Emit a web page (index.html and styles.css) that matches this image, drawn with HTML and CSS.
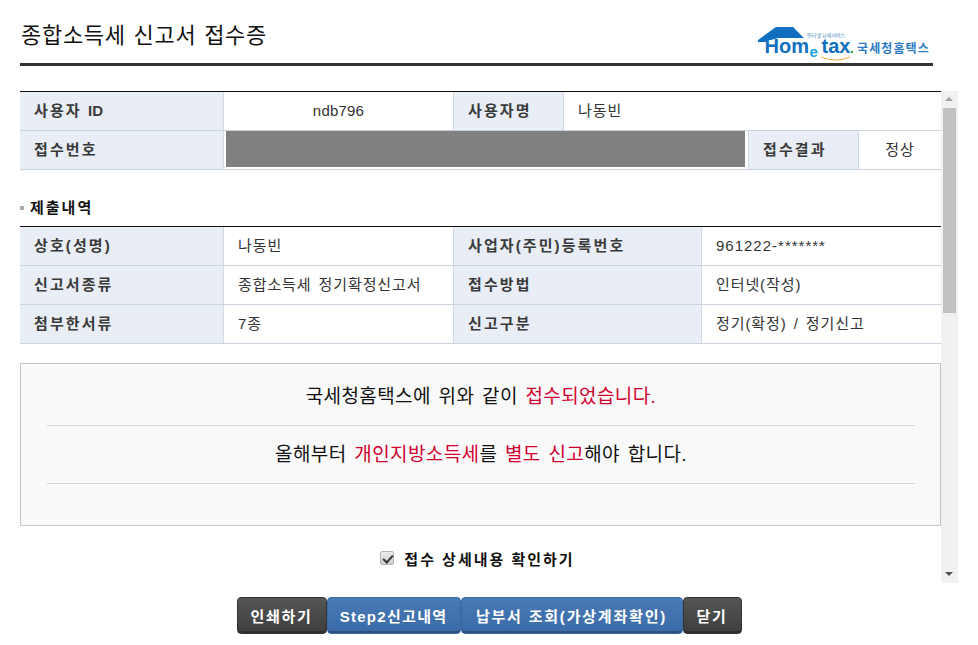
FILE: index.html
```html
<!DOCTYPE html>
<html lang="ko">
<head>
<meta charset="utf-8">
<title>종합소득세 신고서 접수증</title>
<link rel="stylesheet" href="styles.css">
</head>
<body>
<div class="page">
  <header class="head">
    <h1 class="title">종합소득세 신고서 접수증</h1>
    <svg class="logo" width="173" height="36" viewBox="0 0 173 36" aria-label="Hometax 국세청홈택스">
      <path d="M0 13 L18 0 H35 L46 11 H20 L13 13 H8 L8 15 H0 Z" fill="#0f6fbe"/>
      <text x="6.500" y="26" class="logo-word">Hom</text>
      <text x="51.500" y="30" class="logo-e">e</text>
      <text x="63.500" y="26" class="logo-word">tax</text>
      <circle cx="94" cy="25" r="1.300" fill="#2fae4a"/>
      <path d="M63 30 Q78 36 92 30" fill="none" stroke="#f2a93b" stroke-width="1"/>
      <text x="49" y="10" class="logo-tiny">인터넷 납세서비스</text>
      <text x="99" y="26" class="logo-kr">국세청홈택스</text>
    </svg>
  </header>
  <div class="frame">
    <main class="scroll">
      <table class="grid">
        <colgroup><col class="c204"><col class="c230"><col class="c110"><col class="c185"><col class="c110"><col class="c82"></colgroup>
        <tr>
          <th>사용자 <span class="latin">ID</span></th>
          <td class="center latin">ndb796</td>
          <th>사용자명</th>
          <td colspan="3">나동빈</td>
        </tr>
        <tr>
          <th>접수번호</th>
          <td colspan="3" class="redact-cell"><div class="redact"></div></td>
          <th>접수결과</th>
          <td class="center">정상</td>
        </tr>
      </table>
      <h2 class="section"><span class="bullet"></span>제출내역</h2>
      <table class="grid">
        <colgroup><col class="c204"><col class="c230"><col class="c248"><col class="c239"></colgroup>
        <tr><th>상호(성명)</th><td>나동빈</td><th>사업자(주민)등록번호</th><td class="num">961222-*******</td></tr>
        <tr><th>신고서종류</th><td>종합소득세 정기확정신고서</td><th>접수방법</th><td>인터넷(작성)</td></tr>
        <tr><th>첨부한서류</th><td>7종</td><th>신고구분</th><td>정기(확정) / 정기신고</td></tr>
      </table>
      <section class="notice">
        <p class="msg first">국세청홈택스에 위와 같이 <em>접수되었습니다.</em></p>
        <p class="msg">올해부터 <em>개인지방소득세</em>를 <em>별도 신고</em>해야 합니다.</p>
      </section>
      <label class="check"><input type="checkbox" checked><span>접수 상세내용 확인하기</span></label>
    </main>
    <div class="scrollbar">
      <span class="arrow up"></span>
      <div class="track"><div class="thumb"></div></div>
      <span class="arrow down"></span>
    </div>
  </div>
  <nav class="buttons">
    <button class="btn dark b1">인쇄하기</button><button class="btn blue b2">Step2신고내역</button><button class="btn blue b3">납부서 조회(가상계좌확인)</button><button class="btn dark b4">닫기</button>
  </nav>
</div>
</body>
</html>
```
FILE: styles.css
```css
* { box-sizing: border-box; }
html, body { margin: 0; padding: 0; background: #fff; overflow: hidden; }
body { font-family: "Liberation Sans", "Noto Sans CJK KR", sans-serif; color: #333; font-size: 15px; }
.page { width: 978px; height: 645px; padding-top: 14px; }
.head { margin: 0 45px 0 20px; height: 52px; border-bottom: 3px solid #333; display: flex; justify-content: space-between; align-items: flex-start; }
.title { margin: 3px 0 0 1px; font-size: 22px; font-weight: 400; color: #111; line-height: 38px; letter-spacing: 0.7px; word-spacing: 1px; }
.logo { margin-top: 13px; margin-right: 2px; overflow: visible; }
.logo-word { font: 700 20px "Liberation Sans", sans-serif; fill: #0f6fbe; }
.logo-e { font: 700 15px "Liberation Sans", sans-serif; fill: #17a0d8; }
.logo-tiny { font: 400 5px "Noto Sans CJK KR", sans-serif; fill: #3f7fc0; }
.logo-kr { font: 700 12px "Noto Sans CJK KR", sans-serif; fill: #2f7cc4; letter-spacing: 1.100px; }
.frame { margin: 25px 20px 0 20px; display: flex; height: 492px; }
.scroll { width: 921px; overflow: hidden; }
.grid { width: 921px; border-collapse: separate; border-spacing: 0; table-layout: fixed; border-top: 1px solid #111; }
.c204 { width: 204px; } .c230 { width: 230px; } .c110 { width: 110px; } .c185 { width: 185px; } .c82 { width: 82px; } .c248 { width: 248px; } .c239 { width: 239px; }
.grid th, .grid td { height: 39px; padding: 0 0 0 14px; border-bottom: 1px solid #c9d3de; line-height: 20px; text-align: left; white-space: nowrap; }
.grid th { background: #e8edf6; color: #3a3a3a; font-size: 15px; font-weight: 700; letter-spacing: 2.100px; border-right: 1px solid #d3dae3; }
.grid th .latin { letter-spacing: 0.2px; }
.grid td { background: #fff; color: #333; font-size: 15px; letter-spacing: 0.9px; word-spacing: 2px; border-right: 1px solid #d3dae3; }
.grid td:last-child { border-right: 0; }
.grid td.center { text-align: center; padding-left: 0; }
.grid td.latin { letter-spacing: 0.2px; }
.grid td.num { letter-spacing: 1px; }
.grid td.redact-cell { padding: 0 3px 2px 2px; }
.redact { height: 36px; background: #808080; }
.section { margin: 28px 0 8px 0; height: 20px; font-size: 15px; line-height: 20px; font-weight: 700; color: #111; letter-spacing: 2px; display: flex; align-items: center; }
.bullet { width: 4px; height: 4px; background: #a9a9a9; margin-right: 6px; }
.notice { margin-top: 19px; height: 163px; border: 1px solid #c4c4c4; background: #f9f9f9; padding: 0 25px 0 26px; }
.msg { margin: 0; height: 58px; padding-top: 14px; border-bottom: 1px solid #d9d9d9; text-align: center; font-size: 19px; line-height: 30px; color: #111; letter-spacing: 0.4px; word-spacing: 2px; }
.msg.first { height: 62px; padding-top: 18px; }
.msg em { font-style: normal; color: #d0002f; }
.check { margin-top: 22px; padding-right: 6px; display: flex; justify-content: center; align-items: center; font-size: 15px; font-weight: 700; color: #111; letter-spacing: 2px; height: 20px; }
.check input { appearance: none; margin: 0 10px 0 0; width: 14px; height: 14px; border: 1px solid #b5b5b5; border-radius: 2px; background: linear-gradient(#ededed, #cfcfcf); position: relative; }
.check input::after { content: ""; position: absolute; left: 4px; top: 1px; width: 4px; height: 8px; border: solid #333; border-width: 0 2px 2px 0; transform: rotate(42deg); }
.scrollbar { width: 17px; background: #f1f1f1; display: flex; flex-direction: column; align-items: center; }
.arrow { height: 17px; width: 100%; display: block; position: relative; flex: none; }
.arrow::after { content: ""; position: absolute; left: 4px; border-left: 4px solid transparent; border-right: 4px solid transparent; }
.arrow.up::after { top: 6px; border-bottom: 4px solid #a3a3a3; }
.arrow.down::after { top: 6px; border-top: 4px solid #505050; }
.track { flex: 1; width: 100%; }
.thumb { width: 13px; margin: 0 auto; height: 205px; background: #c1c1c1; }
.buttons { margin-top: 14px; display: flex; justify-content: center; }
.btn { height: 37px; border: 1px solid #333; border-radius: 4px; font: 700 15px "Liberation Sans", "Noto Sans CJK KR", sans-serif; color: #fff; padding: 0; letter-spacing: 1.700px; box-shadow: inset 0 -2px 0 rgba(0,0,0,.25); }
.dark { background: linear-gradient(#555, #3e3e3e); }
.blue { background: linear-gradient(#4a7ab5, #3a6ba8); border-color: #3a6ba8; }
.b1 { width: 90px; } .b2 { width: 134px; letter-spacing: 1.300px; } .b3 { width: 222px; letter-spacing: 1.800px; } .b4 { width: 59px; }
```
